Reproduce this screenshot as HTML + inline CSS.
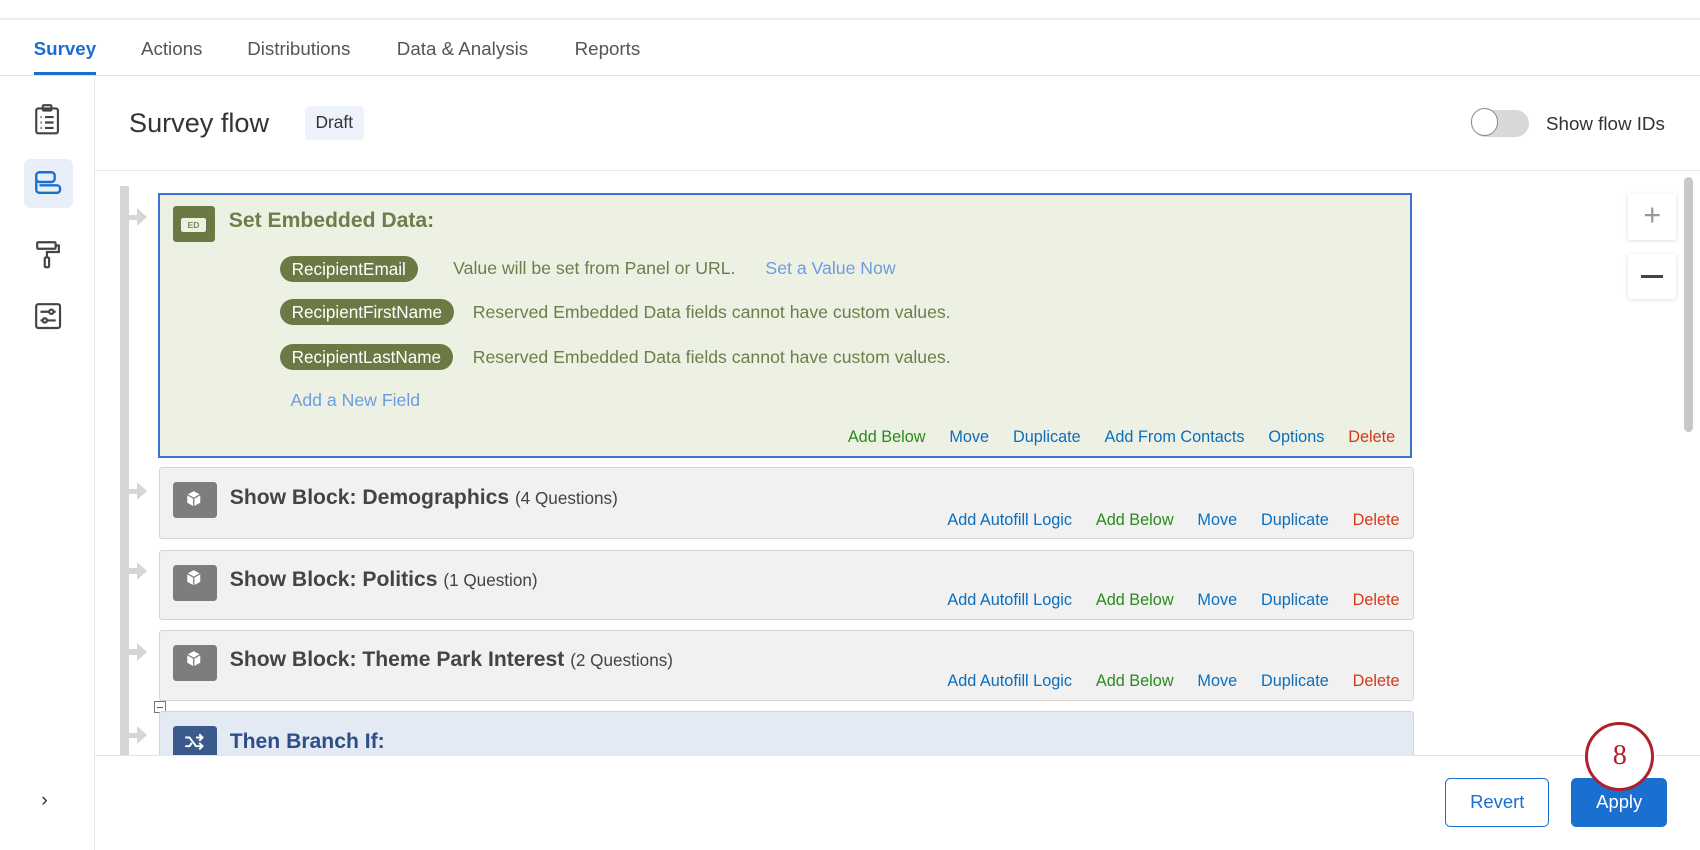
<!DOCTYPE html>
<html><head><meta charset="utf-8"><style>
html,body{margin:0;padding:0;background:#fff;overflow:hidden;width:1700px;height:850px}
#w{zoom:1.08418;width:1568px;height:784px;position:relative;font-family:"Liberation Sans",Arial,sans-serif;color:#333}
.a{position:absolute}
.tab{position:absolute;top:35px;font-size:17.3px;color:#555}
.blk{position:absolute;left:147px;width:1155px;background:#f1f1f1;border:1px solid #d4d4d4;border-radius:3px}
.ic{position:absolute;left:12px;top:13px;width:40px;height:33px;background:#7d7d7d;border-radius:3px}
.bt{position:absolute;left:64px;top:16px;font-size:19.5px;font-weight:bold;color:#444}
.bt span{font-weight:normal;font-size:15.8px}
.acts{position:absolute;right:12px;top:39px;font-size:15px}
.acts span{margin-left:22px;color:#0b6ebd}
.g{color:#2a8a1e!important}.r{color:#d3391b!important}
.pill{position:absolute;left:258px;height:24px;line-height:24px;background:#6b7a44;color:#fff;border-radius:12px;padding:0 11px;font-size:15.8px}
.desc{position:absolute;font-size:16.3px;color:#6e7d4a}
.arr{position:absolute;left:118px;width:0;height:0;border-top:9px solid transparent;border-bottom:9px solid transparent;border-left:10px solid #d6d6d6}
.arrs{position:absolute;left:118px;width:8px;height:5px;background:#d6d6d6}
</style></head><body><div id="w">
<div class="a" style="left:0;top:17px;width:1568px;height:1px;background:#eee"></div>
<div class="tab" style="left:31px;color:#1a6fd1;font-weight:bold">Survey</div>
<div class="a" style="left:31px;top:66px;width:58px;height:3px;background:#1a6fd1"></div>
<div class="tab" style="left:130px">Actions</div>
<div class="tab" style="left:228px">Distributions</div>
<div class="tab" style="left:366px">Data &amp; Analysis</div>
<div class="tab" style="left:530px">Reports</div>
<div class="a" style="left:0;top:69px;width:1568px;height:1px;background:#e4e4e4"></div>
<div class="a" style="left:87px;top:70px;width:1px;height:714px;background:#e8e8e8"></div>
<svg class="a" style="left:30px;top:95px" width="26" height="30" viewBox="0 0 26 30" fill="none" stroke="#444" stroke-width="2"><rect x="3" y="5" width="20" height="23" rx="2"/><rect x="9" y="2" width="8" height="5" rx="1"/><path d="M7 13h1M11 13h8M7 18h1M11 18h8M7 23h1M11 23h8"/></svg>
<div class="a" style="left:22px;top:147px;width:45px;height:45px;background:#e8eff9;border-radius:6px"></div>
<svg class="a" style="left:30px;top:156px" width="28" height="28" viewBox="0 0 28 28" fill="none" stroke="#1a6fd1" stroke-width="2.2"><rect x="3" y="3" width="17" height="9" rx="3"/><path d="M3 10v9a3 3 0 0 0 3 3h16a3 3 0 0 0 3-3v-1a3 3 0 0 0-3-3H6"/></svg>
<svg class="a" style="left:32px;top:220px" width="24" height="30" viewBox="0 0 24 30" fill="none" stroke="#444" stroke-width="2"><rect x="2" y="3" width="17" height="6" rx="1"/><path d="M19 6h3v6H11v5"/><rect x="9" y="17" width="4" height="9" rx="1"/></svg>
<svg class="a" style="left:31px;top:279px" width="26" height="26" viewBox="0 0 26 26" fill="none" stroke="#444" stroke-width="2"><rect x="2" y="2" width="22" height="22" rx="2"/><path d="M6 9h8M18 9h2M6 17h2M12 17h8"/><circle cx="16" cy="9" r="2"/><circle cx="10" cy="17" r="2"/></svg>
<div class="a" style="left:38px;top:728px;font-size:18px;color:#333">›</div>
<div class="a" style="left:119px;top:99px;font-size:25px;color:#333">Survey flow</div>
<div class="a" style="left:281px;top:98px;height:31px;line-height:31px;padding:0 10px;background:#eef2fa;border-radius:4px;font-size:16px;color:#333">Draft</div>
<div class="a" style="left:1358px;top:101px;width:52px;height:25px;background:#d8d8d8;border-radius:13px"></div>
<div class="a" style="left:1357px;top:100px;width:25px;height:25px;background:#fff;border:1px solid #888;border-radius:50%;box-sizing:border-box"></div>
<div class="a" style="left:1426px;top:104px;font-size:17.3px;color:#333">Show flow IDs</div>
<div class="a" style="left:88px;top:157px;width:1480px;height:1px;background:#e6e6e6"></div>
<div class="a" style="left:111px;top:172px;width:8px;height:525px;background:#d6d6d6"></div>
<div class="arrs" style="top:198px"></div><div class="arr" style="top:192px;left:126px"></div>
<div class="arrs" style="top:451px"></div><div class="arr" style="top:445px;left:126px"></div>
<div class="arrs" style="top:524px"></div><div class="arr" style="top:518px;left:126px"></div>
<div class="arrs" style="top:599px"></div><div class="arr" style="top:593px;left:126px"></div>
<div class="arrs" style="top:676px"></div><div class="arr" style="top:670px;left:126px"></div>
<div class="a" style="left:146px;top:178px;width:1156px;height:244px;background:#edf1e4;border:2px solid #3b74d6;box-sizing:border-box"></div>
<div class="a" style="left:160px;top:190px;width:38px;height:33px;background:#6b7a44;border-radius:3px"></div>
<div class="a" style="left:167px;top:201px;width:23px;height:13px;background:#eef0e4;border-radius:2px;font-size:8px;line-height:13px;text-align:center;color:#7a8a55;font-weight:bold">ED</div>
<div class="a" style="left:211px;top:193px;font-size:19.5px;font-weight:bold;color:#6e7d4a">Set Embedded Data:</div>
<div class="pill" style="top:236px">RecipientEmail</div>
<div class="desc" style="left:418px;top:238px">Value will be set from Panel or URL.</div>
<div class="desc" style="left:706px;top:238px;color:#6d9be0">Set a Value Now</div>
<div class="pill" style="top:276px">RecipientFirstName</div>
<div class="desc" style="left:436px;top:279px">Reserved Embedded Data fields cannot have custom values.</div>
<div class="pill" style="top:317px">RecipientLastName</div>
<div class="desc" style="left:436px;top:320px">Reserved Embedded Data fields cannot have custom values.</div>
<div class="desc" style="left:268px;top:360px;color:#6d9be0">Add a New Field</div>
<div class="acts" style="position:absolute;left:782px;top:395px;right:auto"><span class="g" style="margin:0">Add Below</span><span>Move</span><span>Duplicate</span><span>Add From Contacts</span><span>Options</span><span class="r">Delete</span></div>
<div class="blk" style="top:431px;height:64px"><div class="ic"></div><div class="bt">Show Block: Demographics <span>(4 Questions)</span></div><div class="acts"><span>Add Autofill Logic</span><span class="g">Add Below</span><span>Move</span><span>Duplicate</span><span class="r">Delete</span></div></div>
<div class="blk" style="top:507px;height:63px"><div class="ic"></div><div class="bt">Show Block: Politics <span>(1 Question)</span></div><div class="acts" style="top:37px"><span>Add Autofill Logic</span><span class="g">Add Below</span><span>Move</span><span>Duplicate</span><span class="r">Delete</span></div></div>
<div class="blk" style="top:581px;height:64px"><div class="ic"></div><div class="bt">Show Block: Theme Park Interest <span>(2 Questions)</span></div><div class="acts" style="top:38px"><span>Add Autofill Logic</span><span class="g">Add Below</span><span>Move</span><span>Duplicate</span><span class="r">Delete</span></div></div>
<div class="a" style="left:142px;top:647px;width:9px;height:9px;border:1px solid #777;font-size:0"><div style="margin:4px 2px 0;height:1px;background:#555"></div></div>
<div class="blk" style="top:656px;height:60px;background:#e4eaf4;border-color:#cdd5e2"><div class="ic" style="background:#3a5a8c"></div><div class="bt" style="color:#2c4f85">Then Branch If:</div></div>
<svg class="a" style="left:170px;top:451px" width="18" height="18" viewBox="0 0 18 18"><path d="M9 2l6 3.3v7.4L9 16l-6-3.3V5.3z" fill="#fff"/><path d="M3 5.3L9 8.6l6-3.3M9 8.6V16" stroke="#7d7d7d" stroke-width="1.2" fill="none"/></svg>
<svg class="a" style="left:170px;top:524px" width="18" height="18" viewBox="0 0 18 18"><path d="M9 2l6 3.3v7.4L9 16l-6-3.3V5.3z" fill="#fff"/><path d="M3 5.3L9 8.6l6-3.3M9 8.6V16" stroke="#7d7d7d" stroke-width="1.2" fill="none"/></svg>
<svg class="a" style="left:170px;top:599px" width="18" height="18" viewBox="0 0 18 18"><path d="M9 2l6 3.3v7.4L9 16l-6-3.3V5.3z" fill="#fff"/><path d="M3 5.3L9 8.6l6-3.3M9 8.6V16" stroke="#7d7d7d" stroke-width="1.2" fill="none"/></svg>
<svg class="a" style="left:169px;top:674px" width="20" height="20" viewBox="0 0 20 20" fill="none" stroke="#fff" stroke-width="1.8"><path d="M2 6h4l6 8h5M2 14h4l2-3M12 6h5M15 3l3 3-3 3M15 11l3 3-3 3"/></svg>
<div class="a" style="left:1502px;top:179px;width:44px;height:42px;background:#fff;box-shadow:0 1px 4px rgba(0,0,0,.15);text-align:center;font-size:28px;line-height:40px;color:#999">+</div>
<div class="a" style="left:1502px;top:234px;width:44px;height:42px;background:#fff;box-shadow:0 1px 4px rgba(0,0,0,.15)"><div style="margin:20px 12px 0;height:2px;background:#444"></div></div>
<div class="a" style="left:1553px;top:163px;width:9px;height:235px;background:#c8c8c8;border-radius:5px"></div>
<div class="a" style="left:88px;top:696px;width:1480px;height:88px;background:#fff;border-top:1px solid #e4e4e4"></div>
<div class="a" style="left:1333px;top:718px;width:96px;height:45px;border:1px solid #1a6fd1;border-radius:5px;box-sizing:border-box;text-align:center;line-height:43px;font-size:17px;color:#1a6fd1">Revert</div>
<div class="a" style="left:1449px;top:718px;width:89px;height:45px;background:#1a6fd1;border-radius:5px;text-align:center;line-height:45px;font-size:17px;color:#fff">Apply</div>
<div class="a" style="left:1462px;top:666px;width:64px;height:64px;border:3px solid #b0202c;border-radius:50%;box-sizing:border-box;background:#fff;text-align:center;line-height:58px;font-size:26px;color:#b0202c;font-family:'Liberation Serif',serif">8</div>
</div></body></html>
